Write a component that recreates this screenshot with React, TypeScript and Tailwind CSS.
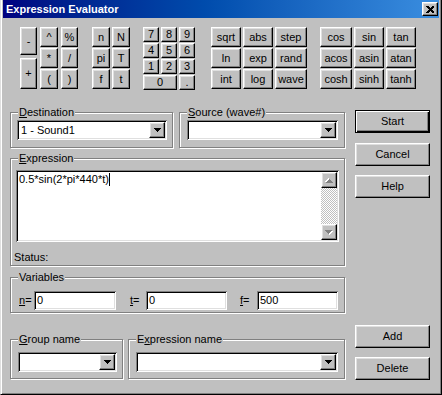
import type { ReactNode } from 'react'

const raised =
  'bg-[#c0c0c0] border border-t-white border-l-white border-r-black border-b-black shadow-[inset_-1px_-1px_#808080,inset_1px_1px_#dfdfdf]'
const sunken =
  'bg-white shadow-[inset_1px_1px_#808080,inset_-1px_-1px_#ffffff,inset_2px_2px_#000000,inset_-2px_-2px_#dfdfdf]'

function Btn({ label, className = '' }: { label: ReactNode; className?: string }) {
  return (
    <button className={`flex items-center justify-center text-[11px] leading-none text-black ${raised} ${className}`}>
      {label}
    </button>
  )
}

function DownArrow({ color = '#000' }: { color?: string }) {
  return (
    <svg width="7" height="4" shapeRendering="crispEdges">
      <rect x="0" y="0" width="7" height="1" fill={color} />
      <rect x="1" y="1" width="5" height="1" fill={color} />
      <rect x="2" y="2" width="3" height="1" fill={color} />
      <rect x="3" y="3" width="1" height="1" fill={color} />
    </svg>
  )
}

function DisabledArrow({ up }: { up?: boolean }) {
  // grey arrow with white shadow, like a disabled scroll button
  return (
    <svg width="8" height="5" shapeRendering="crispEdges" className={up ? 'rotate-180' : ''}>
      <g fill="#ffffff" transform="translate(1,1)">
        <rect x="0" y="0" width="7" height="1" />
        <rect x="1" y="1" width="5" height="1" />
        <rect x="2" y="2" width="3" height="1" />
        <rect x="3" y="3" width="1" height="1" />
      </g>
      <g fill="#808080">
        <rect x="0" y="0" width="7" height="1" />
        <rect x="1" y="1" width="5" height="1" />
        <rect x="2" y="2" width="3" height="1" />
        <rect x="3" y="3" width="1" height="1" />
      </g>
    </svg>
  )
}

function Combo({ value = '', className = '' }: { value?: string; className?: string }) {
  return (
    <div className={`flex h-[20px] p-[2px] ${sunken} ${className}`}>
      <span className="flex-1 pl-[2px] text-[11px] leading-[16px]">{value}</span>
      <div className={`flex h-[16px] w-[16px] items-center justify-center ${raised}`}>
        <DownArrow />
      </div>
    </div>
  )
}

function Group({ label, className = '', children }: { label: ReactNode; className?: string; children?: ReactNode }) {
  return (
    <div className={`border border-[#808080] shadow-[1px_1px_#ffffff,inset_1px_1px_#ffffff] ${className}`}>
      <div className="-mt-[7px] ml-[7px] w-fit bg-[#c0c0c0] px-[1px] text-[11px] leading-[13px]">{label}</div>
      {children}
    </div>
  )
}

function Field({ value, className = '' }: { value: string; className?: string }) {
  return (
    <div className={`h-[19px] pl-[3px] text-[11px] leading-[19px] ${sunken} ${className}`}>{value}</div>
  )
}

export default function App() {
  return (
    <div className="h-[395px] w-[442px] overflow-hidden border-b border-l border-r border-b-black border-l-[#dfdfdf] border-r-black bg-[#c0c0c0] px-[1px] font-['Liberation_Sans',Arial,sans-serif] text-black shadow-[inset_1px_0_#ffffff,inset_-1px_-1px_#808080]">
      <div className="mx-[1px] flex h-[18px] items-center justify-between bg-linear-to-r from-[#000080] to-[#3a8ee0] pl-[3px] pr-[1px]">
        <span className="text-[11px] font-bold leading-none text-white">Expression Evaluator</span>
        <button className={`flex h-[14px] w-[16px] items-center justify-center ${raised}`}>
          <svg width="8" height="7" shapeRendering="crispEdges">
            <path d="M0 0h2l2 2 2-2h2v1L5.5 3.5 8 6v1H6L4 5 2 7H0V6l2.5-2.5L0 1z" fill="#000" />
          </svg>
        </button>
      </div>

      <div className="flex flex-col">
        {/* keypad */}
        <div className="ml-[18px] mt-[9px] flex items-start">
          <div className="flex gap-[3px]">
            <div className="flex w-[17px] flex-col gap-[3px]">
              <Btn label="-" className="h-[28px]" />
              <Btn label="+" className="h-[31px]" />
            </div>
            <div className="grid grid-cols-[18px_17px] grid-rows-[20px_20px_20px] gap-x-[3px] gap-y-[1px]">
              {['^', '%', '*', '/', '(', ')'].map((k) => (
                <Btn key={k} label={k} />
              ))}
            </div>
          </div>

          <div className="ml-[14px] grid grid-cols-[18px_18px] grid-rows-[20px_20px_20px] gap-x-[2px] gap-y-[1px]">
            {['n', 'N', 'pi', 'T', 'f', 't'].map((k) => (
              <Btn key={k} label={k} />
            ))}
          </div>

          <div className="ml-[13px] grid grid-cols-[16px_16px_16px] auto-rows-[15px] gap-x-[2px] gap-y-[1px]">
            {['7', '8', '9', '4', '5', '6', '1', '2', '3'].map((k) => (
              <Btn key={k} label={k} />
            ))}
            <Btn label="0" className="col-span-2" />
            <Btn label="." />
          </div>

          <div className="ml-[16px] grid grid-cols-[30px_30px_32px] grid-rows-[20px_20px_20px] gap-x-[2px] gap-y-[1px]">
            {['sqrt', 'abs', 'step', 'ln', 'exp', 'rand', 'int', 'log', 'wave'].map((k) => (
              <Btn key={k} label={k} />
            ))}
          </div>

          <div className="ml-[13px] grid grid-cols-[32px_30px_30px] grid-rows-[20px_20px_20px] gap-x-[2px] gap-y-[1px]">
            {['cos', 'sin', 'tan', 'acos', 'asin', 'atan', 'cosh', 'sinh', 'tanh'].map((k) => (
              <Btn key={k} label={k} />
            ))}
          </div>
        </div>

        <div className="mt-[20px] flex">
          {/* left column */}
          <div className="ml-[8px] flex w-[335px] flex-col pt-[2px]">
            <div className="flex">
              <Group label={<><u>D</u>estination</>} className="h-[36px] w-[163px]">
                <Combo value="1 - Sound1" className="ml-[6px] mt-[1px] w-[150px]" />
              </Group>
              <Group label={<><u>S</u>ource (wave#)</>} className="ml-[6px] h-[36px] w-[166px]">
                <Combo className="ml-[7px] mt-[1px] w-[151px]" />
              </Group>
            </div>

            <Group label={<><u>E</u>xpression</>} className="mt-[10px] h-[108px]">
              <div className={`ml-[5px] mt-[5px] flex h-[72px] w-[323px] p-[2px] ${sunken}`}>
                <div className="flex flex-1 items-start pl-[1px] pt-[1px] text-[11px] leading-[13px]">
                  <span>0.5*sin(2*pi*440*t)</span>
                  <span className="mt-[0px] h-[13px] w-[1px] bg-black" />
                </div>
                <div className="flex w-[16px] flex-col">
                  <div className={`flex h-[16px] items-center justify-center ${raised}`}>
                    <DisabledArrow up />
                  </div>
                  <div className="flex-1 bg-[repeating-conic-gradient(#c0c0c0_0%_25%,#ffffff_0%_50%)] bg-[length:2px_2px]" />
                  <div className={`flex h-[16px] items-center justify-center ${raised}`}>
                    <DisabledArrow />
                  </div>
                </div>
              </div>
              <div className="ml-[3px] mt-[9px] text-[11px] leading-[13px]">Status:</div>
            </Group>

            <Group label="Variables" className="mt-[11px] h-[36px]">
              <div className="ml-[8px] mt-[7px] flex items-center text-[11px]">
                <span className="w-[15px]">
                  <u>n</u>=
                </span>
                <Field value="0" className="w-[82px]" />
                <span className="ml-[14px] w-[16px]">
                  <u>t</u>=
                </span>
                <Field value="0" className="w-[81px]" />
                <span className="ml-[13px] w-[17px]">
                  <u>f</u>=
                </span>
                <Field value="500" className="w-[81px]" />
              </div>
            </Group>

            <div className="mt-[26px] flex">
              <Group label={<><u>G</u>roup name</>} className="h-[40px] w-[113px]">
                <Combo className="ml-[7px] mt-[6px] w-[99px]" />
              </Group>
              <Group label={<>E<u>x</u>pression name</>} className="ml-[5px] h-[40px] w-[217px]">
                <Combo className="ml-[7px] mt-[6px] w-[202px]" />
              </Group>
            </div>
          </div>

          {/* right column */}
          <div className="ml-[10px] flex w-[75px] flex-col">
            <button className="flex h-[23px] items-center justify-center border border-black bg-[#c0c0c0] text-[11px] leading-none shadow-[inset_1px_1px_#ffffff,inset_-1px_-1px_#000000,inset_-2px_-2px_#808080]">
              Start
            </button>
            <Btn label="Cancel" className="mt-[10px] h-[23px]" />
            <Btn label="Help" className="mt-[9px] h-[23px]" />
            <Btn label="Add" className="mt-[127px] h-[23px]" />
            <Btn label="Delete" className="mt-[9px] h-[23px]" />
          </div>
        </div>
      </div>
    </div>
  )
}
